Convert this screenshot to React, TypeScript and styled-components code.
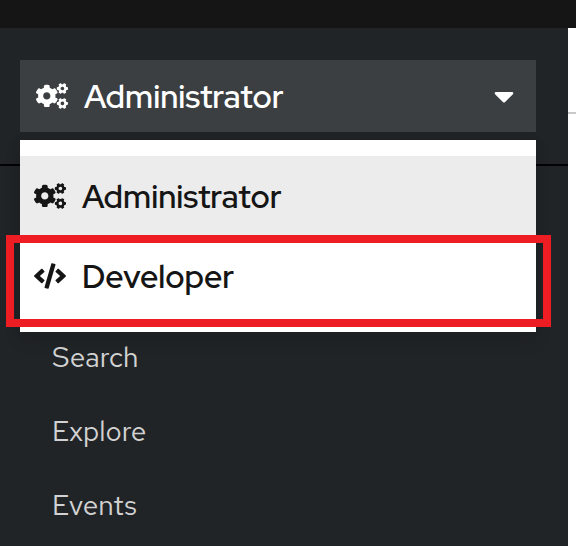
import React from "react";
import styled, { createGlobalStyle } from "styled-components";
import { FaCaretDown, FaCode, FaCogs } from "react-icons/fa";

const GlobalStyle = createGlobalStyle`
  * { box-sizing: border-box; }
  body { margin: 0; overflow: hidden; font-family: "Red Hat Text", Inter, "Liberation Sans", sans-serif; -webkit-font-smoothing: antialiased; }
`;

const Page = styled.div`
  display: flex;
  flex-direction: column;
  width: 576px;
  height: 546px;
  overflow: hidden;
  background: #fff;
`;

const Masthead = styled.header`
  flex: 0 0 28px;
  background: #151515;
`;

const Body = styled.div`
  display: flex;
  flex: 1;
  min-height: 0;
`;

const Sidebar = styled.aside`
  flex: 0 0 568px;
  background: #212427;
`;

const Content = styled.main`
  flex: 1;
  padding-top: 84px;
`;

const Rule = styled.div`
  height: 2px;
  background: #c9c9c9;
`;

const Switcher = styled.div`
  position: relative;
  height: 138px;
  padding: 32px 32px 0 20px;
  border-bottom: 2px solid #030303;
`;

const Toggle = styled.button`
  display: flex;
  align-items: center;
  width: 100%;
  height: 72px;
  padding: 0 22px 0 16px;
  border: 0;
  background: #3c3f42;
  color: #fff;
  font-family: inherit;
  text-align: left;
`;

const IconSlot = styled.span`
  display: flex;
  flex: 0 0 48px;

  svg {
    width: 32px;
    height: 26px;
  }
`;

const Label = styled.span`
  flex: 1;
  padding-top: 2px;
  font-family: "Red Hat Display", "Red Hat Text", Inter, sans-serif;
  font-size: 32px;
  font-weight: 600;
  line-height: 48px;
`;

const Caret = styled(FaCaretDown)`
  width: 20px;
  height: 32px;
`;

const Menu = styled.ul`
  position: absolute;
  top: 112px;
  left: 20px;
  width: 516px;
  margin: 0;
  padding: 16px 0;
  list-style: none;
  background: #fff;
  color: #151515;
  box-shadow: 0 8px 16px rgba(3, 3, 3, 0.12), 0 0 12px rgba(3, 3, 3, 0.06);
`;

const MenuItem = styled.li<{ $active?: boolean }>`
  display: flex;
  align-items: center;
  height: 80px;
  padding: 0 14px;
  background: ${(p) => (p.$active ? "#ececec" : "#fff")};
`;

const Highlight = styled.div`
  position: absolute;
  top: 207px;
  left: 6px;
  width: 545px;
  height: 92px;
  border: 8px solid #ee1c23;
`;

const Nav = styled.nav`
  display: flex;
  flex-direction: column;
  padding: 154px 0 0 52px;
`;

const NavLink = styled.a`
  height: 74px;
  color: #d2d2d2;
  font-size: 28px;
  font-weight: 430;
  line-height: 74px;
`;

export default function App() {
  return (
    <Page>
      <GlobalStyle />
      <Masthead />
      <Body>
        <Sidebar>
          <Switcher>
            <Toggle>
              <IconSlot><FaCogs /></IconSlot>
              <Label>Administrator</Label>
              <Caret />
            </Toggle>
            <Menu>
              <MenuItem $active>
                <IconSlot><FaCogs /></IconSlot>
                <Label>Administrator</Label>
              </MenuItem>
              <MenuItem>
                <IconSlot><FaCode /></IconSlot>
                <Label>Developer</Label>
              </MenuItem>
            </Menu>
            <Highlight />
          </Switcher>
          <Nav>
            <NavLink>Search</NavLink>
            <NavLink>Explore</NavLink>
            <NavLink>Events</NavLink>
          </Nav>
        </Sidebar>
        <Content><Rule /></Content>
      </Body>
    </Page>
  );
}
